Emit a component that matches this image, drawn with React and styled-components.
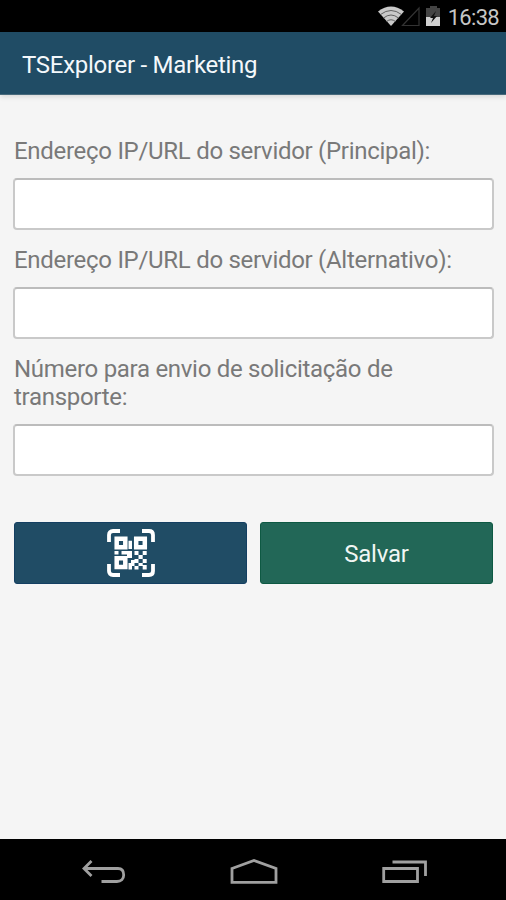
import React from 'react';
import styled, { createGlobalStyle } from 'styled-components';


const GlobalStyle = createGlobalStyle`
  * {
    box-sizing: border-box;
  }

  body {
    margin: 0;
    font-family: Roboto, sans-serif;
  }
`;

const Screen = styled.div`
  display: flex;
  flex-direction: column;
  height: 900px;
  background-color: #f5f5f5;
`;

const StatusBar = styled.div`
  display: flex;
  align-items: center;
  justify-content: flex-end;
  height: 32px;
  padding-right: 7px;
  background-color: #000;
`;

const Clock = styled.span`
  margin-left: 6px;
  padding-top: 4px;
  font-size: 22px;
  line-height: 28px;
  letter-spacing: -0.7px;
  color: #c6c6c6;
`;

const AppBar = styled.header`
  display: flex;
  align-items: center;
  height: 63px;
  padding: 4px 0 0 22px;
  background-color: #204c65;
  border-bottom: 1px solid #47697b;
  box-shadow: 0 2px 5px rgba(0, 0, 0, 0.12);
`;

const Title = styled.h1`
  margin: 0;
  font-size: 24px;
  font-weight: 400;
  letter-spacing: -0.28px;
  color: #f4f8fb;
`;

const Form = styled.form`
  flex: 1;
  padding: 42px 12px 0 13px;
`;

const Field = styled.div`
  margin-bottom: 16px;
`;

const Label = styled.label`
  display: block;
  margin-bottom: 13px;
  padding-left: 1px;
  font-size: 24px;
  line-height: 28px;
  letter-spacing: -0.29px;
  color: #797979;
`;

const Input = styled.input`
  display: block;
  width: 100%;
  height: 52px;
  padding: 0 12px;
  border: 2px solid #c9c9c9;
  border-top-color: #bcbcbc;
  border-radius: 4px;
  background-color: #fff;
  font-size: 24px;
`;

const Actions = styled.div`
  display: flex;
  gap: 13px;
  padding: 30px 1px 0 1px;
`;

const Button = styled.button`
  display: flex;
  flex: 1;
  align-items: center;
  justify-content: center;
  height: 62px;
  padding: ${(props) => props.$offset || 0} 0 0;
  border: 1px solid ${(props) => props.$edge};
  border-radius: 3px;
  background-color: ${(props) => props.$color};
  color: #f0f6f3;
  font-family: inherit;
  font-size: 24px;
  letter-spacing: -0.2px;
`;

const NavBar = styled.nav`
  display: flex;
  align-items: center;
  justify-content: center;
  gap: 103px;
  height: 61px;
  padding: 5px 0 0 4px;
  background-color: #000;
`;

const StatusIcons = () => (
  <svg width="64" height="24" viewBox="377 4 64 24">
    <path d="M377 11.500Q390 1.500 403 11.500L390 26Z" fill="#c9c9c9" />
    <path d="M379.500 14.500Q390 6.500 400.500 14.500M382.500 18Q390 12 397.500 18M385.500 21.500Q390 18 394.500 21.500" fill="none" stroke="#555" strokeWidth="0.900" />
    <path d="M401.500 25.500L418 8V25.500Z" fill="none" stroke="#333" strokeWidth="1.200" />
    <path d="M425 8H429V6H436V8H439V17H425Z" fill="#444" />
    <path d="M425 17H439V26H425Z" fill="#d0d0d0" />
    <path d="M435 11L429 18H432L430 23L436 16H433Z" fill="#111" />
  </svg>
);

const QrIcon = () => (
  <svg width="48" height="48" viewBox="0 0 48 48">
    <path d="M2 13V6Q2 2 6 2H13M35 2H42Q46 2 46 6V13M46 35V42Q46 46 42 46H35M13 46H6Q2 46 2 42V35" fill="none" stroke="#fff" strokeWidth="3.800" />
    <path d="M9.700 9.700H18.300V18.300H9.700ZM29.200 9.700H37.800V18.300H29.200ZM9.700 29.300H18.300V37.900H9.700Z" fill="none" stroke="#fff" strokeWidth="4.500" />
    <path d="M21.500 11.700H25V20H21.500ZM7.500 22H11.500V25.500H7.500ZM14.500 22H25V29H20V25.500H14.500ZM27.500 22H31.500V26H27.500ZM35.700 22H39.700V26H35.700ZM31.500 26H35.700V30H31.500ZM27.500 30H31.500V34H27.500ZM35.700 30H39.700V34H35.700ZM31.500 34H35.700V37H31.500ZM27.500 37H31.500V40.500H27.500ZM35.700 36H39.700V40.500H35.700ZM24 31H27.500V37H25V40.500H21.500V34H24Z" fill="#fff" />
  </svg>
);

const BackIcon = () => (
  <svg width="44" height="26" viewBox="82 859 44 26" fill="none" stroke="#a0a0a0" strokeWidth="2.800">
    <path d="M91.500 861L84 868.500L91.500 876M84 868.500H118C122 868.500 123.700 871 123.700 875C123.700 879 121 881.500 117 881.500H101.500" />
  </svg>
);

const HomeIcon = () => (
  <svg width="50" height="26" viewBox="229 858 50 26" fill="none" stroke="#a0a0a0" strokeWidth="2.800">
    <path d="M232 867.500L254 859.500L276 867.500V881.300H232Z" />
  </svg>
);

const RecentIcon = () => (
  <svg width="46" height="26" viewBox="382 859 46 26" fill="none" stroke="#a0a0a0" strokeWidth="2.800">
    <path d="M383.700 868.500H417.500V881.500H383.700ZM392.500 862H425.500V876" />
  </svg>
);

const TextField = ({ id, label }) => (
  <Field>
    <Label htmlFor={id}>{label}</Label>
    <Input id={id} type="text" />
  </Field>
);

const App = () => {
  return (
    <>
      <GlobalStyle />
      <Screen>
        <StatusBar>
          <StatusIcons />
          <Clock>16:38</Clock>
        </StatusBar>
        <AppBar>
          <Title>TSExplorer - Marketing</Title>
        </AppBar>
        <Form>
          <TextField id="principal" label="Endereço IP/URL do servidor (Principal):" />
          <TextField id="alternativo" label="Endereço IP/URL do servidor (Alternativo):" />
          <TextField id="numero" label="Número para envio de solicitação de transporte:" />
          <Actions>
            <Button type="button" $color="#204c65" $edge="#143f62" aria-label="QR Code">
              <QrIcon />
            </Button>
            <Button type="button" $color="#226757" $edge="#0e5943" $offset="2px">Salvar</Button>
          </Actions>
        </Form>
        <NavBar>
          <BackIcon />
          <HomeIcon />
          <RecentIcon />
        </NavBar>
      </Screen>
    </>
  );
};

export default App;
